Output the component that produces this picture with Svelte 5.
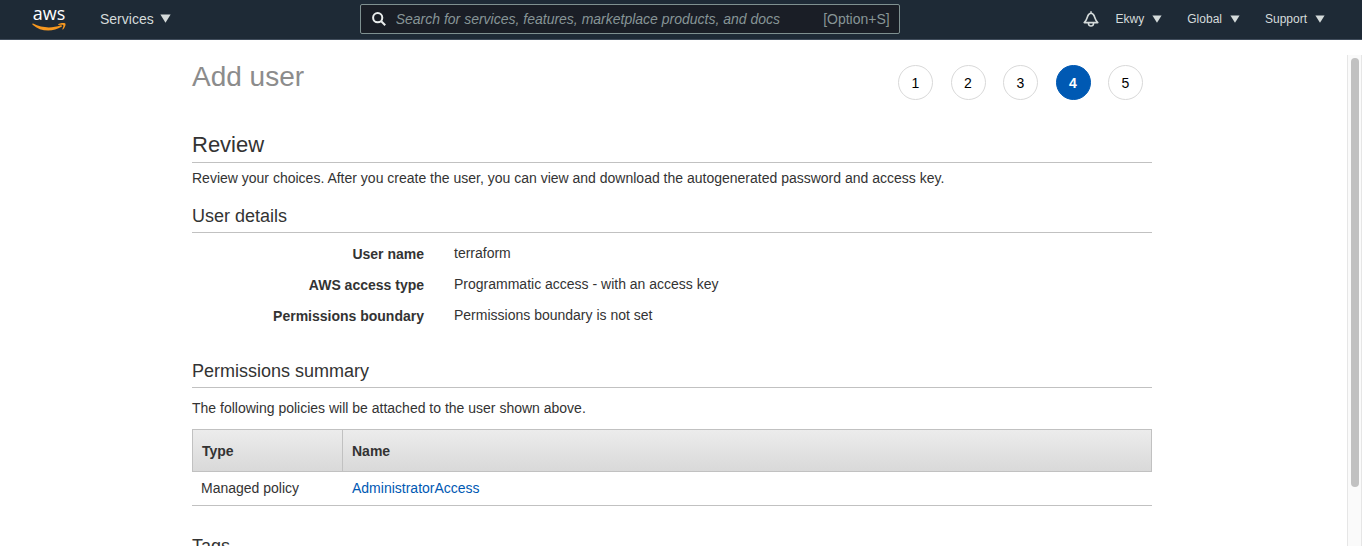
<script>
  const accountMenus = ['Ekwy', 'Global', 'Support'];
  const steps = [1, 2, 3, 4, 5];
  const current = 4;
  const details = [
    ['User name', 'terraform'],
    ['AWS access type', 'Programmatic access - with an access key'],
    ['Permissions boundary', 'Permissions boundary is not set'],
  ];
  const policies = [{ type: 'Managed policy', name: 'AdministratorAccess' }];
</script>

<div class="app">
  <header>
    <a class="logo" href="#home">
      <span>aws</span>
      <svg viewBox="0 0 34 8" width="34" height="8" aria-hidden="true">
        <path d="M1 .6C10.500 5.400 20.500 5.300 28.700 2.300c1.100-.4 1.800.7.800 1.500C21 9.200 8.500 9 .6 1.700c-.6-.6-.3-1.400.4-1.100z" />
        <path d="M26.400 1.100c1.800-1.300 6-1.500 6.900-.7.700.9-.2 4.400-2.300 6-.5.400-.8.100-.6-.4.500-1.300 1.300-3.200.9-3.800-.6-.600-2.900-.3-4.500-.1-.5 0-.7-.500-.4-1z" />
      </svg>
    </a>
    <button class="services" type="button">
      Services
      <svg viewBox="0 0 11 9" width="11" height="9" aria-hidden="true"><path d="M.4.4h10.200L5.500 8.800z" /></svg>
    </button>
    <label class="search">
      <svg viewBox="0 0 14 14" width="14" height="14" aria-hidden="true">
        <circle cx="5.700" cy="5.700" r="4.600" />
        <path d="M9.200 9.200l4 4" />
      </svg>
      <input type="search" aria-label="Search" placeholder="Search for services, features, marketplace products, and docs" />
      <span>[Option+S]</span>
    </label>
    <nav>
      <button class="bell" type="button" aria-label="Notifications">
        <svg viewBox="0 0 16 16" width="16" height="16" aria-hidden="true">
          <path d="M8 .2v2M1.200 11.600C3.600 9.800 3.700 7.600 4.600 5.400 5.300 3.500 6.500 2.300 8 2.300s2.700 1.200 3.400 3.100c.9 2.200 1 4.400 3.400 6.200zM5.500 12v.8c.2 3 4.800 3 5 0V12" />
        </svg>
      </button>
      {#each accountMenus as menu}
        <button type="button">
          {menu}
          <svg viewBox="0 0 10 8" width="10" height="8" aria-hidden="true"><path d="M.4.4h9.200L5 7.800z" /></svg>
        </button>
      {/each}
    </nav>
  </header>

  <div class="body">
    <main>
      <div class="content">
        <div class="title">
          <h1>Add user</h1>
          <ol>
            {#each steps as step}
              <li class:active={step === current} aria-current={step === current ? 'step' : undefined}>{step}</li>
            {/each}
          </ol>
        </div>

        <h2>Review</h2>
        <p class="intro">Review your choices. After you create the user, you can view and download the autogenerated password and access key.</p>

        <section class="first">
          <h3>User details</h3>
          <dl>
            {#each details as [label, value]}
              <dt>{label}</dt>
              <dd>{value}</dd>
            {/each}
          </dl>
        </section>

        <section>
          <h3>Permissions summary</h3>
          <p class="note">The following policies will be attached to the user shown above.</p>
          <table>
            <thead>
              <tr><th class="type" scope="col">Type</th><th scope="col">Name</th></tr>
            </thead>
            <tbody>
              {#each policies as policy}
                <tr><td>{policy.type}</td><td><a href="#policy">{policy.name}</a></td></tr>
              {/each}
            </tbody>
          </table>
        </section>

        <section class="tags">
          <h3>Tags</h3>
        </section>
      </div>
    </main>
    <div class="track" aria-hidden="true"><div class="thumb"></div></div>
  </div>
</div>

<style>
  .app {
    display: flex;
    flex-direction: column;
    height: 100vh;
    overflow: hidden;
    background: #fff;
    color: #333;
    font: 14px/20px "Helvetica Neue", "Liberation Sans", Arial, sans-serif;
  }
  .app * { box-sizing: border-box; }

  header {
    display: flex;
    flex: none;
    align-items: center;
    height: 40px;
    padding: 0 37px 2px 32px;
    border-bottom: 1px solid #414d5c;
    background: #1e2a36;
    color: #d5dbdb;
  }
  button {
    display: flex;
    align-items: center;
    padding: 0;
    border: 0;
    background: none;
    color: inherit;
    font: inherit;
  }
  button svg { fill: #d5dbdb; }
  .logo {
    display: flex;
    flex-direction: column;
    align-items: center;
    gap: 3px;
    width: 34px;
    color: #fff;
    font: 500 18px/14px "Open Sans", sans-serif;
    text-decoration: none;
  }
  .logo svg { fill: #f7981f; }
  .services {
    gap: 6px;
    margin-left: 34px;
  }
  .search {
    display: flex;
    flex: 0 1 540px;
    align-items: center;
    height: 30px;
    margin-left: 189px;
    padding: 0 9px 0 11px;
    border: 1px solid #7f9090;
    border-radius: 2px;
    background: #1a1e26;
    color: #879596;
  }
  .search svg {
    flex: none;
    fill: none;
    stroke: #eaeded;
    stroke-width: 2;
  }
  .search input {
    flex: 1;
    min-width: 0;
    margin-left: 10px;
    padding: 0;
    border: 0;
    outline: 0;
    background: none;
    color: #fff;
    font: inherit;
  }
  .search input::placeholder {
    color: #879596;
    font-style: italic;
    opacity: 1;
  }
  nav {
    display: flex;
    align-items: center;
    gap: 25px;
    margin-left: auto;
    font-size: 12px;
  }
  nav button { gap: 8px; }
  nav .bell { margin-right: -8px; }
  .bell svg {
    fill: none;
    stroke: #d5dbdb;
    stroke-width: 1.6;
    stroke-linejoin: round;
  }

  .body {
    display: flex;
    flex: 1;
    min-height: 0;
  }
  main {
    flex: 1;
    padding: 19px 3px 0 0;
    overflow: hidden;
  }
  .content {
    max-width: 960px;
    margin: 0 auto;
  }
  .title {
    display: flex;
    justify-content: space-between;
    padding-right: 9px;
  }
  h1, h2, h3, p, ol, dl, dd {
    margin: 0;
    font-weight: 400;
  }
  h1 {
    color: #8c8c8c;
    font-size: 28px;
    line-height: 36px;
  }
  ol {
    display: flex;
    justify-content: space-between;
    width: 245px;
    margin-top: 6px;
    padding: 0;
    list-style: none;
  }
  li {
    width: 35px;
    height: 35px;
    border: 1px solid #d9d9d9;
    border-radius: 50%;
    color: #000;
    line-height: 35px;
    text-align: center;
  }
  li.active {
    border-color: #0059b3;
    background: #0059b3;
    color: #fff;
    font-weight: 700;
  }
  h2, h3 { border-bottom: 1px solid #c1c1c1; }
  h2 {
    margin-top: 31px;
    padding-bottom: 3px;
    font-size: 22px;
    line-height: 28px;
  }
  h3 {
    padding-bottom: 4px;
    font-size: 18px;
    line-height: 24px;
  }
  .intro { margin-top: 5px; }
  .note { margin: 10px 0 11px; }
  section { margin-top: 34px; }
  section.first { margin-top: 16px; }
  section.tags { margin-top: 28px; }

  dl {
    display: grid;
    grid-template-columns: 232px 1fr;
    gap: 11px 30px;
    margin-top: 10px;
  }
  dt {
    height: 20px;
    padding-top: 1px;
    font-weight: 700;
    text-align: right;
  }

  table {
    width: 100%;
    border-collapse: separate;
    border-spacing: 0;
    table-layout: fixed;
  }
  th {
    height: 43px;
    padding: 0 9px;
    border: 1px solid #c1c1c1;
    border-left: 0;
    background: linear-gradient(#ececec, #d9d9d9);
    text-align: left;
  }
  th.type {
    width: 151px;
    border-left: 1px solid #c1c1c1;
  }
  td {
    height: 34px;
    padding: 0 9px 2px;
    border-bottom: 1px solid #c1c1c1;
  }
  td a {
    color: #0059b3;
    text-decoration: none;
  }

  .track {
    flex: none;
    width: 15px;
    margin-top: 15px;
    padding: 3px 2px 0 3px;
    border: solid #e6e6e6;
    border-width: 0 1px;
    background: #fafafa;
  }
  .thumb {
    width: 8px;
    height: 88%;
    border-radius: 4px;
    background: #c1c1c1;
  }
</style>
